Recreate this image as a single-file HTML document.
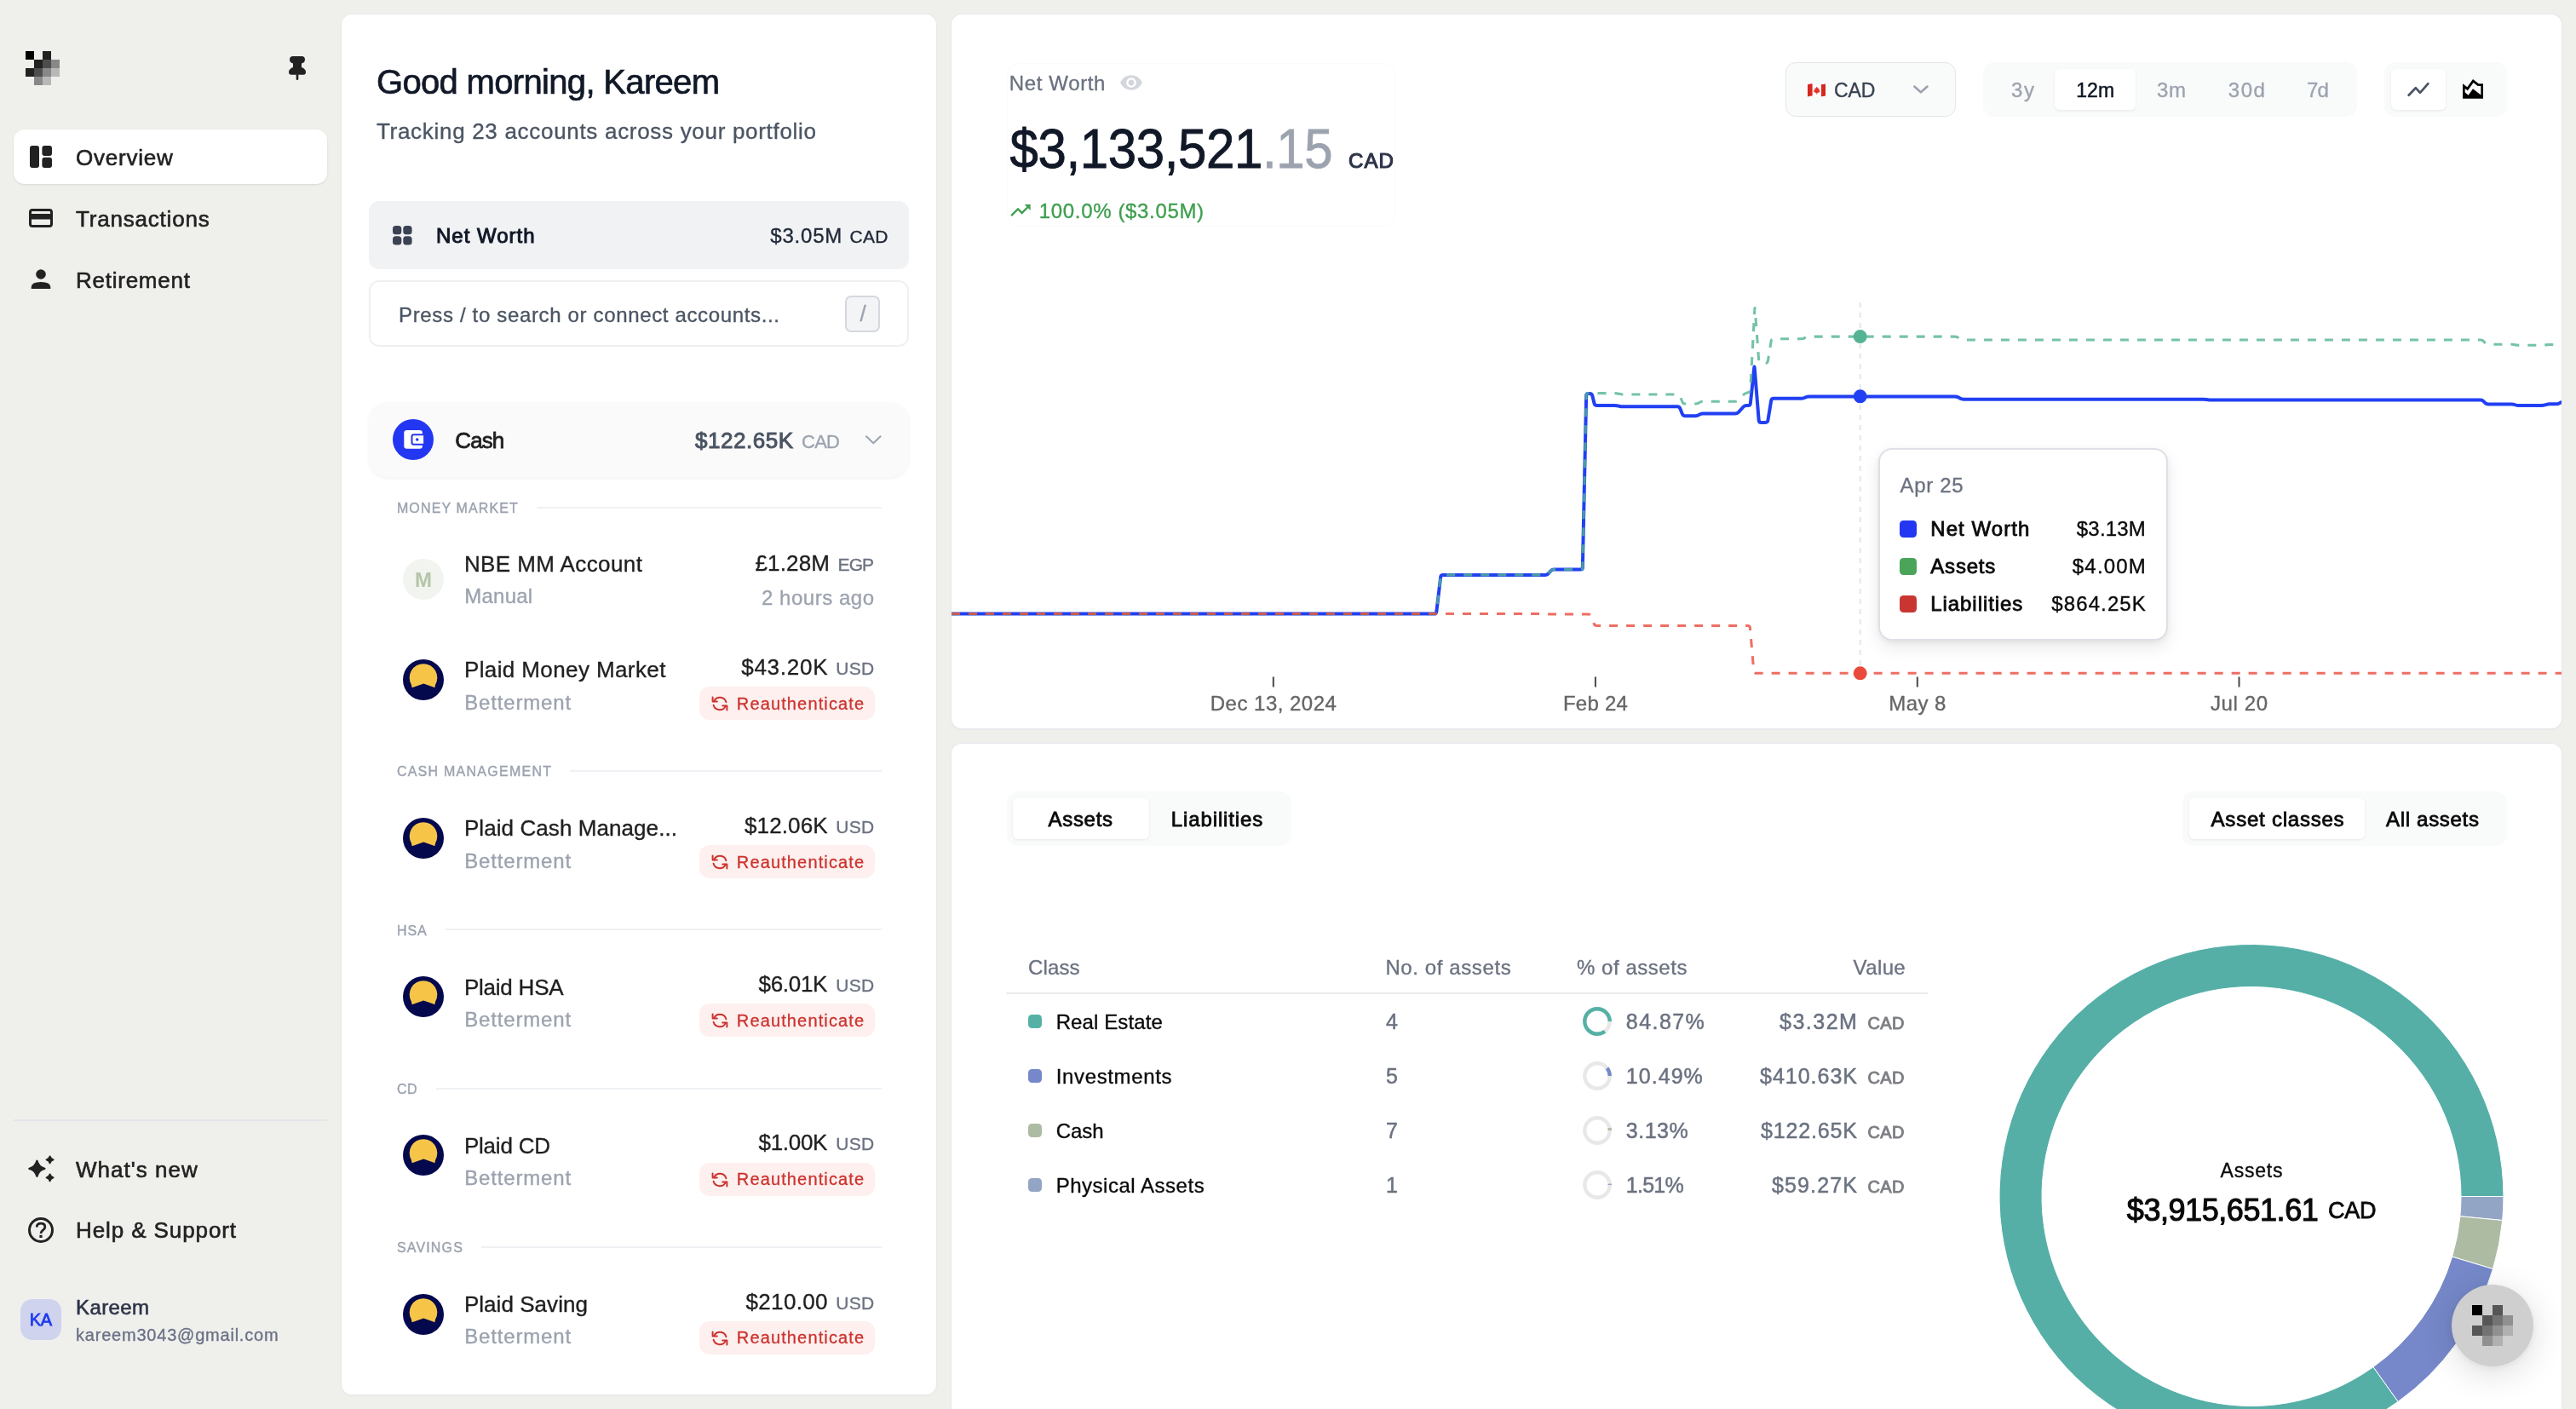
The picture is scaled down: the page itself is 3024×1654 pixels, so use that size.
<!DOCTYPE html>
<html><head><meta charset="utf-8"><title>Dashboard</title>
<style>
html,body{margin:0;padding:0;}
body{width:3024px;height:1654px;overflow:hidden;background:#eff0ec;position:relative;font-family:"Liberation Sans",sans-serif;}
.t{position:absolute;white-space:nowrap;line-height:1;}
.b{position:absolute;display:block;}
svg{overflow:visible;}
#root{position:absolute;left:0;top:0;width:3024px;height:1654px;overflow:hidden;will-change:transform;transform:translateZ(0);}
</style></head><body><div id="root">
<svg class="b" style="left:30px;top:60px;shape-rendering:crispEdges;" width="40" height="40" viewBox="0 0 40 40"><rect x="0" y="0" width="10" height="10" fill="#000"/><rect x="20" y="0" width="10" height="10" fill="#222"/><rect x="10" y="10" width="10" height="10" fill="#222"/><rect x="20" y="10" width="10" height="10" fill="#4d4d4d"/><rect x="30" y="10" width="10" height="10" fill="#888"/><rect x="0" y="20" width="10" height="10" fill="#222"/><rect x="10" y="20" width="10" height="10" fill="#4d4d4d"/><rect x="20" y="20" width="10" height="10" fill="#888"/><rect x="30" y="20" width="10" height="10" fill="#b8b8b8"/><rect x="10" y="30" width="10" height="10" fill="#888"/><rect x="20" y="30" width="10" height="10" fill="#b8b8b8"/></svg>
<svg class="b" style="left:335px;top:62px;" width="28" height="36" viewBox="0 0 28 36"><path d="M9 4 H19 Q23 4 23 8 Q23 11.5 19 12.5 L19 17 Q24 19 24 22.5 Q24 25.8 21 25.8 H7 Q4 25.8 4 22.5 Q4 19 9 17 L9 12.5 Q5 11.5 5 8 Q5 4 9 4 Z" fill="#222"/><rect x="12.7" y="25" width="2.6" height="7" rx="1.3" fill="#222"/></svg>
<div class="b" style="left:16px;top:152px;width:368px;height:64px;background:#fff;border-radius:13px;box-shadow:0 1px 3px rgba(0,0,0,0.08),0 1px 2px rgba(0,0,0,0.04);"></div>
<svg class="b" style="left:35px;top:171px;" width="26" height="26" viewBox="0 0 26 26"><rect x="0" y="0" width="11" height="26" rx="3" fill="#222"/><rect x="14.4" y="0" width="11.6" height="11.9" rx="3" fill="#222"/><rect x="14.4" y="13.8" width="11.6" height="12.2" rx="3" fill="#222"/></svg>
<div class="t" style="left:89.00px;top:172.00px;font-size:26px;color:#222222;letter-spacing:0.786px;-webkit-text-stroke:0.6px #222222;">Overview</div>
<svg class="b" style="left:34px;top:245px;" width="28" height="22" viewBox="0 0 28 22"><rect x="1.5" y="1.5" width="25" height="19" rx="2.5" fill="none" stroke="#222" stroke-width="3"/><rect x="1.5" y="6" width="25" height="6.5" fill="#222"/></svg>
<div class="t" style="left:89.00px;top:244.00px;font-size:26px;color:#222222;letter-spacing:0.800px;-webkit-text-stroke:0.6px #222222;">Transactions</div>
<svg class="b" style="left:36px;top:316px;" width="24" height="24" viewBox="0 0 24 24"><circle cx="12" cy="6" r="5.8" fill="#222"/><path d="M0.7 23 V21 Q0.7 15 12 15 Q23.3 15 23.3 21 V23 Z" fill="#222"/></svg>
<div class="t" style="left:89.00px;top:316.00px;font-size:26px;color:#222222;letter-spacing:0.750px;-webkit-text-stroke:0.6px #222222;">Retirement</div>
<div class="b" style="left:16px;top:1314px;width:368px;height:2px;background:#e4e4ec;"></div>
<svg class="b" style="left:30px;top:1354px;" width="40" height="40" viewBox="0 0 40 40"><path d="M13.4 8.8 Q15.200000000000001 16.0 22.4 17.8 Q15.200000000000001 19.6 13.4 26.8 Q11.6 19.6 4.4 17.8 Q11.6 16.0 13.4 8.8 Z" fill="#222" stroke="#222" stroke-width="2.4" stroke-linejoin="round"/><path d="M28.6 3.3000000000000007 Q29.42 6.58 32.7 7.4 Q29.42 8.22 28.6 11.5 Q27.78 8.22 24.5 7.4 Q27.78 6.58 28.6 3.3000000000000007 Z" fill="#222" stroke="#222" stroke-width="1.8" stroke-linejoin="round"/><path d="M28.6 24.299999999999997 Q29.42 27.58 32.7 28.4 Q29.42 29.22 28.6 32.5 Q27.78 29.22 24.5 28.4 Q27.78 27.58 28.6 24.299999999999997 Z" fill="#222" stroke="#222" stroke-width="1.8" stroke-linejoin="round"/></svg>
<div class="t" style="left:89.00px;top:1360.00px;font-size:26px;color:#222222;letter-spacing:1.028px;-webkit-text-stroke:0.6px #222222;">What&#x27;s new</div>
<svg class="b" style="left:32px;top:1428px;" width="32" height="32" viewBox="0 0 32 32"><circle cx="16" cy="16" r="13.5" fill="none" stroke="#222" stroke-width="3"/><path d="M11.2 12.5 Q11.2 8.2 16 8.2 Q20.8 8.2 20.8 12.2 Q20.8 14.5 18.3 16.2 Q16 17.8 16 20" fill="none" stroke="#222" stroke-width="2.8" stroke-linecap="butt"/><rect x="14.4" y="21.8" width="3.2" height="3.2" fill="#222"/></svg>
<div class="t" style="left:89.00px;top:1431.00px;font-size:26px;color:#222222;letter-spacing:0.904px;-webkit-text-stroke:0.6px #222222;">Help &amp; Support</div>
<div class="b" style="left:24px;top:1525px;width:48px;height:48px;background:#d0d3ee;border-radius:14px;"></div>
<div class="t" style="left:34.75px;top:1539.00px;font-size:20px;color:#1f3bf0;letter-spacing:-0.250px;-webkit-text-stroke:0.8px #1f3bf0;">KA</div>
<div class="t" style="left:89.00px;top:1523.00px;font-size:24px;color:#2d3348;letter-spacing:0.400px;-webkit-text-stroke:0.6px #2d3348;">Kareem</div>
<div class="t" style="left:89.00px;top:1557.00px;font-size:20px;color:#6b7186;letter-spacing:0.787px;-webkit-text-stroke:0.35px #6b7186;">kareem3043@gmail.com</div>
<div class="b" style="left:401px;top:17px;width:698px;height:1620px;background:#fff;border-radius:12px;box-shadow:0 0 0 1px #e7e8ee,0 1px 3px rgba(0,0,0,0.05);"></div>
<div class="t" style="left:442.00px;top:76.00px;font-size:40px;color:#111827;letter-spacing:-0.671px;-webkit-text-stroke:0.7px #111827;">Good morning, Kareem</div>
<div class="t" style="left:442.00px;top:141.00px;font-size:26px;color:#4b5563;letter-spacing:0.695px;-webkit-text-stroke:0.35px #4b5563;">Tracking 23 accounts across your portfolio</div>
<div class="b" style="left:433px;top:236px;width:634px;height:80px;background:#f1f2f4;border-radius:12px;"></div>
<svg class="b" style="left:461px;top:265px;" width="23" height="23" viewBox="0 0 23 23"><rect x="0" y="0" width="10.3" height="10.3" rx="3.6" fill="#3b4254"/><rect x="0" y="12.3" width="10.3" height="10.3" rx="3.6" fill="#3b4254"/><rect x="12.3" y="0" width="10.3" height="10.3" rx="3.6" fill="#3b4254"/><rect x="12.3" y="12.3" width="10.3" height="10.3" rx="3.6" fill="#3b4254"/></svg>
<div class="t" style="left:512.00px;top:265.00px;font-size:24px;color:#111827;letter-spacing:0.988px;-webkit-text-stroke:1.0px #111827;">Net Worth</div>
<div class="t" style="left:997.40px;top:267.00px;font-size:21px;color:#1f2937;letter-spacing:0.325px;-webkit-text-stroke:0.35px #1f2937;">CAD</div>
<div class="t" style="left:904.30px;top:265.00px;font-size:24px;color:#1f2937;letter-spacing:0.800px;-webkit-text-stroke:0.35px #1f2937;">$3.05M</div>
<div class="b" style="left:433px;top:329px;width:634px;height:78px;background:#fff;border-radius:12px;border:2px solid #eef0f3;box-sizing:border-box;"></div>
<div class="t" style="left:468.00px;top:358.00px;font-size:24px;color:#4b5563;letter-spacing:0.654px;-webkit-text-stroke:0.35px #4b5563;">Press / to search or connect accounts...</div>
<div class="b" style="left:992px;top:346.5px;width:41px;height:43.0px;background:#f3f4f6;border-radius:7px;border:2px solid #d5d8de;box-sizing:border-box;"></div>
<div class="t" style="left:1009.38px;top:355.00px;font-size:26px;color:#9ca3af;-webkit-text-stroke:0.35px #9ca3af;">/</div>
<div class="b" style="left:433px;top:472px;width:634px;height:88px;background:#fafafa;border-radius:22px;box-shadow:0 2px 4px rgba(0,0,0,0.05);"></div>
<svg class="b" style="left:461px;top:492px;" width="48" height="48" viewBox="0 0 48 48"><circle cx="24" cy="24" r="24" fill="#2337f2"/><rect x="13.3" y="13" width="21.6" height="21.8" rx="3.2" fill="#fff"/><path d="M36.1,18.3 H24.7 Q22.5,18.3 22.5,20.5 V27.5 Q22.5,29.7 24.7,29.7 H36.1" fill="#fff" stroke="#2337f2" stroke-width="2"/><circle cx="28.7" cy="23.9" r="1.75" fill="#2337f2"/></svg>
<div class="t" style="left:534.30px;top:504.00px;font-size:26px;color:#1f1f1f;letter-spacing:-0.917px;-webkit-text-stroke:0.8px #1f1f1f;">Cash</div>
<div class="t" style="left:816.00px;top:504.00px;font-size:26px;color:#4b5563;letter-spacing:0.536px;-webkit-text-stroke:1.0px #4b5563;">$122.65K</div>
<div class="t" style="left:941.00px;top:508.00px;font-size:22px;color:#9ca3af;letter-spacing:-0.750px;-webkit-text-stroke:0.35px #9ca3af;">CAD</div>
<svg class="b" style="left:1013px;top:509px;" width="24" height="14" viewBox="0 0 24 14"><path d="M4 3.2 L12.3 11.3 L20.6 3.2" fill="none" stroke="#9ca3af" stroke-width="2" stroke-linecap="round" stroke-linejoin="round"/></svg>
<div class="t" style="left:465.90px;top:589.00px;font-size:16px;color:#9ca3af;letter-spacing:1.136px;-webkit-text-stroke:0.4px #9ca3af;">MONEY MARKET</div>
<div class="b" style="left:630.1999999999999px;top:594.9px;width:404.80000000000007px;height:2.0px;background:#eff1f4;"></div>
<div class="b" style="left:473px;top:656px;width:48px;height:48px;background:#f1f4ef;border-radius:24px;"></div>
<div class="t" style="left:487.00px;top:669.00px;font-size:24px;color:#b6c5a9;font-weight:700;">M</div>
<div class="t" style="left:544.90px;top:649.00px;font-size:26px;color:#1f1f1f;letter-spacing:0.404px;-webkit-text-stroke:0.35px #1f1f1f;">NBE MM Account</div>
<div class="t" style="left:545.20px;top:688.00px;font-size:24px;color:#9ca3af;letter-spacing:0.250px;-webkit-text-stroke:0.35px #9ca3af;">Manual</div>
<div class="t" style="left:983.50px;top:652.00px;font-size:21px;color:#6b7280;letter-spacing:-0.875px;-webkit-text-stroke:0.35px #6b7280;">EGP</div>
<div class="t" style="left:886.50px;top:648.00px;font-size:26px;color:#1f1f1f;letter-spacing:0.150px;-webkit-text-stroke:0.35px #1f1f1f;">£1.28M</div>
<div class="t" style="left:894.00px;top:690.00px;font-size:24px;color:#9ca3af;letter-spacing:0.525px;-webkit-text-stroke:0.35px #9ca3af;">2 hours ago</div>
<svg class="b" style="left:473px;top:773.7px;" width="48" height="48" viewBox="0 0 48 48"><circle cx="24" cy="24" r="24" fill="#04084d"/><path d="M24 5.2 A16.3 16.3 0 0 1 38.2 29.5 L37.3 33.2 L24.3 28.6 L10.7 33.2 L9.8 29.5 A16.3 16.3 0 0 1 24 5.2 Z" fill="#f6c548"/></svg>
<div class="t" style="left:544.90px;top:773.00px;font-size:26px;color:#1f1f1f;letter-spacing:0.397px;-webkit-text-stroke:0.35px #1f1f1f;">Plaid Money Market</div>
<div class="t" style="left:545.20px;top:813.00px;font-size:24px;color:#9ca3af;letter-spacing:0.833px;-webkit-text-stroke:0.35px #9ca3af;">Betterment</div>
<div class="t" style="left:981.30px;top:774.00px;font-size:21px;color:#6b7280;letter-spacing:0.225px;-webkit-text-stroke:0.35px #6b7280;">USD</div>
<div class="t" style="left:870.20px;top:770.00px;font-size:26px;color:#1f1f1f;letter-spacing:0.758px;-webkit-text-stroke:0.35px #1f1f1f;">$43.20K</div>
<div class="b" style="left:821px;top:805.9000000000001px;width:206px;height:39.0px;background:#fdf0ef;border-radius:12px;"></div>
<svg class="b" style="left:835px;top:815.9000000000001px;" width="20" height="20" viewBox="0 0 20 20"><g fill="none" stroke="#cc332e" stroke-width="2" stroke-linecap="round" stroke-linejoin="round"><path d="M3.2 7.2 A7.6 7.6 0 0 1 17.4 8.2"/><path d="M1.6 2.4 V7.6 H6.8"/><path d="M16.8 12.8 A7.6 7.6 0 0 1 2.6 11.8"/><path d="M18.4 17.6 V12.4 H13.2"/></g></svg>
<div class="t" style="left:864.80px;top:816.00px;font-size:20px;color:#cc332e;letter-spacing:1.138px;-webkit-text-stroke:0.3px #cc332e;">Reauthenticate</div>
<div class="t" style="left:465.90px;top:898.00px;font-size:16px;color:#9ca3af;letter-spacing:1.250px;-webkit-text-stroke:0.4px #9ca3af;">CASH MANAGEMENT</div>
<div class="b" style="left:669.1999999999999px;top:904.0999999999999px;width:365.80000000000007px;height:2.0px;background:#eff1f4;"></div>
<svg class="b" style="left:473px;top:959.8px;" width="48" height="48" viewBox="0 0 48 48"><circle cx="24" cy="24" r="24" fill="#04084d"/><path d="M24 5.2 A16.3 16.3 0 0 1 38.2 29.5 L37.3 33.2 L24.3 28.6 L10.7 33.2 L9.8 29.5 A16.3 16.3 0 0 1 24 5.2 Z" fill="#f6c548"/></svg>
<div class="t" style="left:544.90px;top:959.00px;font-size:26px;color:#1f1f1f;letter-spacing:0.079px;-webkit-text-stroke:0.35px #1f1f1f;">Plaid Cash Manage...</div>
<div class="t" style="left:545.20px;top:999.00px;font-size:24px;color:#9ca3af;letter-spacing:0.833px;-webkit-text-stroke:0.35px #9ca3af;">Betterment</div>
<div class="t" style="left:981.30px;top:960.00px;font-size:21px;color:#6b7280;letter-spacing:0.225px;-webkit-text-stroke:0.35px #6b7280;">USD</div>
<div class="t" style="left:874.00px;top:956.00px;font-size:26px;color:#1f1f1f;letter-spacing:0.125px;-webkit-text-stroke:0.35px #1f1f1f;">$12.06K</div>
<div class="b" style="left:821px;top:992.0px;width:206px;height:39.0px;background:#fdf0ef;border-radius:12px;"></div>
<svg class="b" style="left:835px;top:1002.0px;" width="20" height="20" viewBox="0 0 20 20"><g fill="none" stroke="#cc332e" stroke-width="2" stroke-linecap="round" stroke-linejoin="round"><path d="M3.2 7.2 A7.6 7.6 0 0 1 17.4 8.2"/><path d="M1.6 2.4 V7.6 H6.8"/><path d="M16.8 12.8 A7.6 7.6 0 0 1 2.6 11.8"/><path d="M18.4 17.6 V12.4 H13.2"/></g></svg>
<div class="t" style="left:864.80px;top:1002.00px;font-size:20px;color:#cc332e;letter-spacing:1.138px;-webkit-text-stroke:0.3px #cc332e;">Reauthenticate</div>
<div class="t" style="left:465.90px;top:1085.00px;font-size:16px;color:#9ca3af;letter-spacing:1.000px;-webkit-text-stroke:0.4px #9ca3af;">HSA</div>
<div class="b" style="left:523.1999999999999px;top:1090.3px;width:511.80000000000007px;height:2.0px;background:#eff1f4;"></div>
<svg class="b" style="left:473px;top:1146.0px;" width="48" height="48" viewBox="0 0 48 48"><circle cx="24" cy="24" r="24" fill="#04084d"/><path d="M24 5.2 A16.3 16.3 0 0 1 38.2 29.5 L37.3 33.2 L24.3 28.6 L10.7 33.2 L9.8 29.5 A16.3 16.3 0 0 1 24 5.2 Z" fill="#f6c548"/></svg>
<div class="t" style="left:544.90px;top:1146.00px;font-size:26px;color:#1f1f1f;letter-spacing:-0.219px;-webkit-text-stroke:0.35px #1f1f1f;">Plaid HSA</div>
<div class="t" style="left:545.20px;top:1185.00px;font-size:24px;color:#9ca3af;letter-spacing:0.833px;-webkit-text-stroke:0.35px #9ca3af;">Betterment</div>
<div class="t" style="left:981.30px;top:1146.00px;font-size:21px;color:#6b7280;letter-spacing:0.225px;-webkit-text-stroke:0.35px #6b7280;">USD</div>
<div class="t" style="left:890.50px;top:1142.00px;font-size:26px;color:#1f1f1f;letter-spacing:-0.300px;-webkit-text-stroke:0.35px #1f1f1f;">$6.01K</div>
<div class="b" style="left:821px;top:1178.2px;width:206px;height:39.0px;background:#fdf0ef;border-radius:12px;"></div>
<svg class="b" style="left:835px;top:1188.2px;" width="20" height="20" viewBox="0 0 20 20"><g fill="none" stroke="#cc332e" stroke-width="2" stroke-linecap="round" stroke-linejoin="round"><path d="M3.2 7.2 A7.6 7.6 0 0 1 17.4 8.2"/><path d="M1.6 2.4 V7.6 H6.8"/><path d="M16.8 12.8 A7.6 7.6 0 0 1 2.6 11.8"/><path d="M18.4 17.6 V12.4 H13.2"/></g></svg>
<div class="t" style="left:864.80px;top:1188.00px;font-size:20px;color:#cc332e;letter-spacing:1.138px;-webkit-text-stroke:0.3px #cc332e;">Reauthenticate</div>
<div class="t" style="left:465.90px;top:1271.00px;font-size:16px;color:#9ca3af;letter-spacing:0.500px;-webkit-text-stroke:0.4px #9ca3af;">CD</div>
<div class="b" style="left:511.7px;top:1276.6px;width:523.3px;height:2.0px;background:#eff1f4;"></div>
<svg class="b" style="left:473px;top:1332.3px;" width="48" height="48" viewBox="0 0 48 48"><circle cx="24" cy="24" r="24" fill="#04084d"/><path d="M24 5.2 A16.3 16.3 0 0 1 38.2 29.5 L37.3 33.2 L24.3 28.6 L10.7 33.2 L9.8 29.5 A16.3 16.3 0 0 1 24 5.2 Z" fill="#f6c548"/></svg>
<div class="t" style="left:544.90px;top:1332.00px;font-size:26px;color:#1f1f1f;letter-spacing:-0.214px;-webkit-text-stroke:0.35px #1f1f1f;">Plaid CD</div>
<div class="t" style="left:545.20px;top:1371.00px;font-size:24px;color:#9ca3af;letter-spacing:0.833px;-webkit-text-stroke:0.35px #9ca3af;">Betterment</div>
<div class="t" style="left:981.30px;top:1332.00px;font-size:21px;color:#6b7280;letter-spacing:0.225px;-webkit-text-stroke:0.35px #6b7280;">USD</div>
<div class="t" style="left:890.50px;top:1328.00px;font-size:26px;color:#1f1f1f;letter-spacing:-0.300px;-webkit-text-stroke:0.35px #1f1f1f;">$1.00K</div>
<div class="b" style="left:821px;top:1364.5px;width:206px;height:39.0px;background:#fdf0ef;border-radius:12px;"></div>
<svg class="b" style="left:835px;top:1374.5px;" width="20" height="20" viewBox="0 0 20 20"><g fill="none" stroke="#cc332e" stroke-width="2" stroke-linecap="round" stroke-linejoin="round"><path d="M3.2 7.2 A7.6 7.6 0 0 1 17.4 8.2"/><path d="M1.6 2.4 V7.6 H6.8"/><path d="M16.8 12.8 A7.6 7.6 0 0 1 2.6 11.8"/><path d="M18.4 17.6 V12.4 H13.2"/></g></svg>
<div class="t" style="left:864.80px;top:1374.00px;font-size:20px;color:#cc332e;letter-spacing:1.138px;-webkit-text-stroke:0.3px #cc332e;">Reauthenticate</div>
<div class="t" style="left:465.90px;top:1457.00px;font-size:16px;color:#9ca3af;letter-spacing:1.167px;-webkit-text-stroke:0.4px #9ca3af;">SAVINGS</div>
<div class="b" style="left:565.1999999999999px;top:1462.8px;width:469.80000000000007px;height:2.0px;background:#eff1f4;"></div>
<svg class="b" style="left:473px;top:1518.5px;" width="48" height="48" viewBox="0 0 48 48"><circle cx="24" cy="24" r="24" fill="#04084d"/><path d="M24 5.2 A16.3 16.3 0 0 1 38.2 29.5 L37.3 33.2 L24.3 28.6 L10.7 33.2 L9.8 29.5 A16.3 16.3 0 0 1 24 5.2 Z" fill="#f6c548"/></svg>
<div class="t" style="left:544.90px;top:1518.00px;font-size:26px;color:#1f1f1f;letter-spacing:0.045px;-webkit-text-stroke:0.35px #1f1f1f;">Plaid Saving</div>
<div class="t" style="left:545.20px;top:1557.00px;font-size:24px;color:#9ca3af;letter-spacing:0.833px;-webkit-text-stroke:0.35px #9ca3af;">Betterment</div>
<div class="t" style="left:981.30px;top:1519.00px;font-size:21px;color:#6b7280;letter-spacing:0.225px;-webkit-text-stroke:0.35px #6b7280;">USD</div>
<div class="t" style="left:875.50px;top:1515.00px;font-size:26px;color:#1f1f1f;letter-spacing:0.333px;-webkit-text-stroke:0.35px #1f1f1f;">$210.00</div>
<div class="b" style="left:821px;top:1550.7px;width:206px;height:39.0px;background:#fdf0ef;border-radius:12px;"></div>
<svg class="b" style="left:835px;top:1560.7px;" width="20" height="20" viewBox="0 0 20 20"><g fill="none" stroke="#cc332e" stroke-width="2" stroke-linecap="round" stroke-linejoin="round"><path d="M3.2 7.2 A7.6 7.6 0 0 1 17.4 8.2"/><path d="M1.6 2.4 V7.6 H6.8"/><path d="M16.8 12.8 A7.6 7.6 0 0 1 2.6 11.8"/><path d="M18.4 17.6 V12.4 H13.2"/></g></svg>
<div class="t" style="left:864.80px;top:1560.00px;font-size:20px;color:#cc332e;letter-spacing:1.138px;-webkit-text-stroke:0.3px #cc332e;">Reauthenticate</div>
<div class="b" style="left:1117px;top:17px;width:1890px;height:838px;background:#fff;border-radius:12px;box-shadow:0 0 0 1px #e7e8ee,0 1px 3px rgba(0,0,0,0.05);"></div>
<div class="b" style="left:1181.5px;top:73.5px;width:456.5px;height:192.2px;background:transparent;border-radius:14px;border:1.5px solid #fbfbfb;box-sizing:border-box;"></div>
<div class="t" style="left:1184.80px;top:86.00px;font-size:24px;color:#6b7280;letter-spacing:0.625px;-webkit-text-stroke:0.35px #6b7280;">Net Worth</div>
<svg class="b" style="left:1314px;top:82.7px;" width="28" height="28" viewBox="0 0 24 24"><path fill="#d3d6dd" d="M12 4.5C7 4.5 2.73 7.61 1 12c1.73 4.39 6 7.5 11 7.5s9.27-3.11 11-7.5c-1.73-4.39-6-7.5-11-7.5zM12 17c-2.76 0-5-2.24-5-5s2.24-5 5-5 5 2.24 5 5-2.24 5-5 5zm0-8c-1.66 0-3 1.34-3 3s1.34 3 3 3 3-1.34 3-3-1.34-3-3-3z"/></svg>
<div class="t" style="left:1185.60px;top:147.00px;font-size:60px;color:#111827;letter-spacing:-0.396px;-webkit-text-stroke:0.8px #111827;transform:scaleY(1.065);transform-origin:0 50px;">$3,133,521<span style="color:#9ca3af;-webkit-text-stroke-color:#9ca3af">.15</span></div>
<div class="t" style="left:1583.00px;top:177.00px;font-size:24px;color:#2d3348;letter-spacing:1.125px;-webkit-text-stroke:1.1px #2d3348;">CAD</div>
<svg class="b" style="left:1183.5px;top:232.6px;" width="28" height="28" viewBox="0 0 24 24"><path fill="#3f9f4f" d="M16 6l2.29 2.29-4.88 4.88-4-4L2 16.59 3.41 18l6-6 4 4 6.3-6.29L22 12V6z"/></svg>
<div class="t" style="left:1219.80px;top:236.00px;font-size:24px;color:#3f9f4f;letter-spacing:0.657px;-webkit-text-stroke:0.35px #3f9f4f;">100.0% ($3.05M)</div>
<div class="b" style="left:2096px;top:73px;width:200px;height:64px;background:#f9fafa;border-radius:12px;border:1.5px solid #e4e6ec;box-sizing:border-box;"></div>
<svg class="b" style="left:2121px;top:96.6px;" width="23" height="18" viewBox="0 0 23 18"><path d="M1 2.2 Q6 0.8 11.5 1.8 T22 1.4 V15.6 Q17 17 11.5 16 T1 16.4 Z" fill="#fff"/><path d="M1 2.2 Q3.8 1.4 6.6 1.3 V15.5 Q3.8 15.6 1 16.4 Z" fill="#d5281f"/><path d="M17 2.1 Q19.5 2 22 1.4 V15.6 Q19.5 16.3 17 16.3 Z" fill="#d5281f"/><path d="M11.8 4.6 L13 6.8 L14.4 6.2 L14 8.6 L15.6 8.4 L15 10 L15.8 10.6 L12.6 12.2 L12.2 12.3 V13.8 H11.4 V12.3 L11 12.2 L7.8 10.6 L8.6 10 L8 8.4 L9.6 8.6 L9.2 6.2 L10.6 6.8 Z" fill="#e63329"/></svg>
<div class="t" style="left:2153.00px;top:95.00px;font-size:23px;color:#374151;letter-spacing:-0.100px;-webkit-text-stroke:0.35px #374151;">CAD</div>
<svg class="b" style="left:2244px;top:98px;" width="22" height="14" viewBox="0 0 22 14"><path d="M3.3 3.6 L10.9 10.3 L18.5 3.6" fill="none" stroke="#9ca3af" stroke-width="2.6" stroke-linecap="round" stroke-linejoin="round"/></svg>
<div class="b" style="left:2328px;top:73px;width:439px;height:64px;background:#f9fafa;border-radius:13px;"></div>
<div class="b" style="left:2412px;top:81px;width:95px;height:48px;background:#fff;border-radius:6px;box-shadow:0 1px 3px rgba(0,0,0,0.08);"></div>
<div class="t" style="left:2361.00px;top:94.00px;font-size:24px;color:#9ca3af;letter-spacing:1.750px;-webkit-text-stroke:0.35px #9ca3af;">3y</div>
<div class="t" style="left:2437.20px;top:95.00px;font-size:23px;color:#111827;letter-spacing:0.125px;-webkit-text-stroke:0.5px #111827;">12m</div>
<div class="t" style="left:2532.00px;top:94.00px;font-size:24px;color:#9ca3af;letter-spacing:0.750px;-webkit-text-stroke:0.35px #9ca3af;">3m</div>
<div class="t" style="left:2615.80px;top:94.00px;font-size:24px;color:#9ca3af;letter-spacing:1.500px;-webkit-text-stroke:0.35px #9ca3af;">30d</div>
<div class="t" style="left:2708.00px;top:94.00px;font-size:24px;color:#9ca3af;letter-spacing:-0.750px;-webkit-text-stroke:0.35px #9ca3af;">7d</div>
<div class="b" style="left:2799px;top:73px;width:144px;height:64px;background:#f9fafa;border-radius:13px;"></div>
<div class="b" style="left:2807px;top:81px;width:64px;height:48px;background:#fff;border-radius:6px;box-shadow:0 1px 3px rgba(0,0,0,0.08);"></div>
<svg class="b" style="left:2820px;top:90px;" width="40" height="30" viewBox="0 0 40 30"><polyline points="7.6,21.8 15.8,13.2 21,18.8 30.4,8.2" fill="none" stroke="#4b5563" stroke-width="2.7" stroke-linecap="round" stroke-linejoin="round"/></svg>
<svg class="b" style="left:2887px;top:89.3px;" width="32" height="32" viewBox="0 0 24 24"><path fill="#000" fill-rule="evenodd" d="M17,7l-5-4l-5,7L3,7v13h18V7H17z M19,16.95l-7-5.45L8,17l-3-2.4V11.2l2.44,1.83l4.96-6.95L16.3,9H19V16.95z"/></svg>
<svg class="b" style="left:1117px;top:0;overflow:hidden" width="1890" height="870" viewBox="1117 0 1890 870"><line x1="2183.7" y1="355.1" x2="2183.7" y2="790" stroke="#e6e6e6" stroke-width="2" stroke-dasharray="6 6"/><path d="M1117,720.6 L1683.60,720.60 Q1686,720.6 1686.29,718.22 L1691.21,677.28 Q1691.5,674.9 1693.90,674.90 L1814.10,674.90 Q1816.5,674.9 1818.00,673.02 L1820.10,670.38 Q1821.6,668.5 1824.00,668.50 L1855.40,668.50 Q1857.8,668.5 1857.85,666.10 L1862.15,464.40 Q1862.2,462 1864.60,462.00 L1866.20,462.00 Q1868.6,462 1869.20,464.32 L1871.60,473.68 Q1872.2,476 1874.60,476.00 L1895.60,476.00 Q1898,476 1900.32,476.60 L1900.68,476.70 Q1903,477.3 1905.40,477.30 L1969.00,477.30 Q1971.4,477.3 1972.30,479.53 L1974.90,485.97 Q1975.8,488.2 1978.20,488.20 L1990.40,488.20 Q1992.7,488.2 1994.60,486.90 L1994.60,486.90 Q1996.5,485.6 1998.80,485.60 L2036.90,485.60 Q2039.3,485.6 2040.91,483.82 L2046.39,477.78 Q2048,476 2050.40,476.00 L2052.20,476.00 Q2054.6,476 2054.85,473.61 L2059.25,431.79 Q2059.5,429.4 2059.69,431.79 L2064.71,493.51 Q2064.9,495.9 2067.30,495.90 L2072.60,495.90 Q2075,495.9 2075.39,493.53 L2079.21,470.17 Q2079.6,467.8 2082.00,467.80 L2114.20,467.80 Q2116.6,467.8 2118.76,466.74 L2119.34,466.46 Q2121.5,465.4 2123.90,465.40 L2294.70,465.40 Q2297.1,465.4 2299.18,466.60 L2300.72,467.50 Q2302.8,468.7 2305.20,468.70 L2585.60,468.70 Q2588,468.7 2590.37,469.06 L2591.63,469.24 Q2594,469.6 2596.40,469.60 L2911.70,469.60 Q2914.1,469.6 2915.76,471.33 L2917.14,472.77 Q2918.8,474.5 2921.20,474.50 L2948.66,474.50 Q2950.7,474.5 2952.60,475.25 L2952.60,475.25 Q2954.5,476 2956.54,476.00 L2983.60,476.00 Q2986,476 2988.27,475.23 L2988.73,475.07 Q2991,474.3 2993.40,474.30 L3001.22,474.30 Q3003,474.3 3004.50,473.35 L3006,472.4" fill="none" stroke="#2140f3" stroke-width="4" stroke-linejoin="round" stroke-linecap="round"/><path d="M1117,720.6 L1683.60,720.60 Q1686,720.6 1686.29,718.22 L1691.21,677.28 Q1691.5,674.9 1693.90,674.90 L1814.10,674.90 Q1816.5,674.9 1818.00,673.02 L1820.10,670.38 Q1821.6,668.5 1824.00,668.50 L1855.40,668.50 Q1857.8,668.5 1857.85,666.10 L1862.15,464.00 Q1862.2,461.6 1864.60,461.60 L1895.60,461.60 Q1898,461.6 1900.31,462.25 L1900.69,462.35 Q1903,463 1905.40,463.00 L1969.00,463.00 Q1971.4,463 1972.29,465.23 L1974.91,471.77 Q1975.8,474 1978.20,474.00 L1990.37,474.00 Q1992.7,474 1994.60,472.65 L1994.60,472.65 Q1996.5,471.3 1998.83,471.30 L2036.90,471.30 Q2039.3,471.3 2040.94,469.55 L2046.36,463.75 Q2048,462 2050.30,461.30 L2052.30,460.70 Q2054.6,460 2054.73,457.60 L2059.87,362.40 Q2060,360 2060.18,362.39 L2064.72,423.81 Q2064.9,426.2 2067.30,426.20 L2072.60,426.20 Q2075,426.2 2075.38,423.83 L2079.22,400.07 Q2079.6,397.7 2082.00,397.70 L2114.20,397.70 Q2116.6,397.7 2118.72,396.58 L2119.38,396.22 Q2121.5,395.1 2123.90,395.10 L2294.70,395.10 Q2297.1,395.1 2299.08,396.46 L2300.82,397.64 Q2302.8,399 2305.20,399.00 L2911.70,399.00 Q2914.1,399 2915.69,400.80 L2917.21,402.50 Q2918.8,404.3 2921.20,404.30 L2948.74,404.30 Q2950.7,404.3 2952.60,404.80 L2952.60,404.80 Q2954.5,405.3 2956.46,405.30 L2983.60,405.30 Q2986,405.3 2988.37,404.92 L2988.63,404.88 Q2991,404.5 2993.40,404.50 L3002,404.5" fill="none" stroke="#53b394" stroke-opacity="0.8" stroke-width="3.1" stroke-dasharray="10 10" stroke-linejoin="round"/><path d="M1117,720.6 L1815.47,720.60 Q1816.5,720.6 1817.50,720.85 L1817.50,720.85 Q1818.5,721.1 1819.53,721.10 L1864.40,721.10 Q1866.8,721.1 1867.67,723.34 L1871.13,732.16 Q1872,734.4 1874.40,734.40 L2051.80,734.40 Q2054.2,734.4 2054.41,736.79 L2058.79,787.91 Q2059,790.3 2061.40,790.30 L3007,790.3" fill="none" stroke="#ea4a3c" stroke-opacity="0.8" stroke-width="3" stroke-dasharray="10 10" stroke-linejoin="round"/><circle cx="2183.7" cy="395.1" r="8" fill="#53b394"/><circle cx="2183.7" cy="465.3" r="8" fill="#2140f3"/><circle cx="2183.7" cy="790.3" r="8" fill="#ea4a3c"/><line x1="1494.8" y1="794.5" x2="1494.8" y2="806.5" stroke="#484848" stroke-width="2"/><line x1="1872.9" y1="794.5" x2="1872.9" y2="806.5" stroke="#484848" stroke-width="2"/><line x1="2250.8" y1="794.5" x2="2250.8" y2="806.5" stroke="#484848" stroke-width="2"/><line x1="2628.5" y1="794.5" x2="2628.5" y2="806.5" stroke="#484848" stroke-width="2"/></svg>
<div class="t" style="left:1420.80px;top:814.00px;font-size:24px;color:#666;letter-spacing:0.477px;-webkit-text-stroke:0.35px #666;">Dec 13, 2024</div>
<div class="t" style="left:1834.90px;top:814.00px;font-size:24px;color:#666;letter-spacing:0.250px;-webkit-text-stroke:0.35px #666;">Feb 24</div>
<div class="t" style="left:2217.30px;top:814.00px;font-size:24px;color:#666;letter-spacing:0.438px;-webkit-text-stroke:0.35px #666;">May 8</div>
<div class="t" style="left:2595.00px;top:814.00px;font-size:24px;color:#666;letter-spacing:0.600px;-webkit-text-stroke:0.35px #666;">Jul 20</div>
<div class="b" style="left:2204.5px;top:525.5px;width:340.0px;height:226.0px;background:#fff;border-radius:16px;border:2px solid #dfdfe8;box-sizing:border-box;box-shadow:0 8px 20px rgba(0,0,0,0.09),0 2px 6px rgba(0,0,0,0.05);"></div>
<div class="t" style="left:2230.60px;top:558.00px;font-size:24px;color:#6b7280;letter-spacing:0.650px;-webkit-text-stroke:0.35px #6b7280;">Apr 25</div>
<div class="b" style="left:2229.8px;top:611px;width:20.0px;height:20px;background:#2337f2;border-radius:4.5px;"></div>
<div class="t" style="left:2266.30px;top:609.00px;font-size:24px;color:#0a0a0a;letter-spacing:1.062px;-webkit-text-stroke:0.8px #0a0a0a;">Net Worth</div>
<div class="t" style="left:2437.80px;top:609.00px;font-size:24px;color:#0a0a0a;letter-spacing:0.200px;-webkit-text-stroke:0.35px #0a0a0a;">$3.13M</div>
<div class="b" style="left:2229.8px;top:655px;width:20.0px;height:20px;background:#4aa559;border-radius:4.5px;"></div>
<div class="t" style="left:2266.30px;top:653.00px;font-size:24px;color:#0a0a0a;letter-spacing:0.800px;-webkit-text-stroke:0.8px #0a0a0a;">Assets</div>
<div class="t" style="left:2432.80px;top:653.00px;font-size:24px;color:#0a0a0a;letter-spacing:1.200px;-webkit-text-stroke:0.35px #0a0a0a;">$4.00M</div>
<div class="b" style="left:2229.8px;top:699px;width:20.0px;height:20px;background:#c93632;border-radius:4.5px;"></div>
<div class="t" style="left:2266.30px;top:697.00px;font-size:24px;color:#0a0a0a;letter-spacing:0.925px;-webkit-text-stroke:0.8px #0a0a0a;">Liabilities</div>
<div class="t" style="left:2408.30px;top:697.00px;font-size:24px;color:#0a0a0a;letter-spacing:1.107px;-webkit-text-stroke:0.35px #0a0a0a;">$864.25K</div>
<div class="b" style="left:1117px;top:873px;width:1890px;height:827px;background:#fff;border-radius:12px;box-shadow:0 0 0 1px #e7e8ee,0 1px 3px rgba(0,0,0,0.05);"></div>
<div class="b" style="left:1181.5px;top:929px;width:334.5px;height:64px;background:#f9fafa;border-radius:13px;"></div>
<div class="b" style="left:1188.5px;top:937px;width:160.5px;height:48px;background:#fff;border-radius:6px;box-shadow:0 1px 3px rgba(0,0,0,0.08);"></div>
<div class="t" style="left:1230.40px;top:950.00px;font-size:24px;color:#0a0a0a;letter-spacing:0.740px;-webkit-text-stroke:0.8px #0a0a0a;">Assets</div>
<div class="t" style="left:1374.80px;top:950.00px;font-size:24px;color:#0a0a0a;letter-spacing:0.875px;-webkit-text-stroke:0.8px #0a0a0a;">Liabilities</div>
<div class="b" style="left:2562px;top:929px;width:381px;height:64px;background:#f9fafa;border-radius:13px;"></div>
<div class="b" style="left:2570px;top:937px;width:206px;height:48px;background:#fff;border-radius:6px;box-shadow:0 1px 3px rgba(0,0,0,0.08);"></div>
<div class="t" style="left:2595.60px;top:950.00px;font-size:24px;color:#0a0a0a;letter-spacing:0.771px;-webkit-text-stroke:0.8px #0a0a0a;">Asset classes</div>
<div class="t" style="left:2801.00px;top:950.00px;font-size:24px;color:#0a0a0a;letter-spacing:0.694px;-webkit-text-stroke:0.8px #0a0a0a;">All assets</div>
<div class="t" style="left:1207.00px;top:1124.00px;font-size:24px;color:#6b7280;letter-spacing:0.125px;-webkit-text-stroke:0.35px #6b7280;">Class</div>
<div class="t" style="left:1626.40px;top:1124.00px;font-size:24px;color:#6b7280;letter-spacing:0.600px;-webkit-text-stroke:0.35px #6b7280;">No. of assets</div>
<div class="t" style="left:1851.00px;top:1124.00px;font-size:24px;color:#6b7280;letter-spacing:0.540px;-webkit-text-stroke:0.35px #6b7280;">% of assets</div>
<div class="t" style="left:2175.60px;top:1124.00px;font-size:24px;color:#6b7280;letter-spacing:0.375px;-webkit-text-stroke:0.35px #6b7280;">Value</div>
<div class="b" style="left:1181px;top:1165px;width:1082px;height:2px;background:#e9ebee;"></div>
<div class="b" style="left:1207px;top:1191.0px;width:16px;height:16.0px;background:#55b1a6;border-radius:4.5px;"></div>
<div class="t" style="left:1239.70px;top:1188.00px;font-size:24px;color:#0a0a0a;letter-spacing:0.100px;-webkit-text-stroke:0.35px #0a0a0a;">Real Estate</div>
<div class="t" style="left:1627.00px;top:1187.00px;font-size:25px;color:#6b7280;-webkit-text-stroke:0.5px #6b7280;">4</div>
<svg class="b" style="left:1857px;top:1180.8px;" width="36" height="36" viewBox="0 0 36 36"><circle cx="18" cy="18" r="14.7" fill="none" stroke="#e8e8e8" stroke-width="4.4"/><circle cx="18" cy="18" r="14.7" fill="none" stroke="#55b1a6" stroke-width="4.4" stroke-dasharray="78.39 92.36" transform="translate(0,36) scale(1,-1)"/></svg>
<div class="t" style="left:1908.80px;top:1187.00px;font-size:25px;color:#6b7280;letter-spacing:1.450px;-webkit-text-stroke:0.5px #6b7280;">84.87%</div>
<div class="t" style="left:2089.00px;top:1187.00px;font-size:25px;color:#6b7280;letter-spacing:1.500px;-webkit-text-stroke:0.5px #6b7280;">$3.32M</div>
<div class="t" style="left:2192.40px;top:1191.00px;font-size:20px;color:#7d7f84;letter-spacing:0.375px;-webkit-text-stroke:0.9px #7d7f84;">CAD</div>
<div class="b" style="left:1207px;top:1255.15px;width:16px;height:16.0px;background:#7688c9;border-radius:4.5px;"></div>
<div class="t" style="left:1239.70px;top:1252.00px;font-size:24px;color:#0a0a0a;letter-spacing:0.650px;-webkit-text-stroke:0.35px #0a0a0a;">Investments</div>
<div class="t" style="left:1627.00px;top:1251.00px;font-size:25px;color:#6b7280;-webkit-text-stroke:0.5px #6b7280;">5</div>
<svg class="b" style="left:1857px;top:1244.95px;" width="36" height="36" viewBox="0 0 36 36"><circle cx="18" cy="18" r="14.7" fill="none" stroke="#e8e8e8" stroke-width="4.4"/><circle cx="18" cy="18" r="14.7" fill="none" stroke="#7688c9" stroke-width="4.4" stroke-dasharray="9.69 92.36" transform="translate(0,36) scale(1,-1)"/></svg>
<div class="t" style="left:1908.80px;top:1251.00px;font-size:25px;color:#6b7280;letter-spacing:1.050px;-webkit-text-stroke:0.5px #6b7280;">10.49%</div>
<div class="t" style="left:2066.00px;top:1251.00px;font-size:25px;color:#6b7280;letter-spacing:1.000px;-webkit-text-stroke:0.5px #6b7280;">$410.63K</div>
<div class="t" style="left:2192.40px;top:1255.00px;font-size:20px;color:#7d7f84;letter-spacing:0.375px;-webkit-text-stroke:0.9px #7d7f84;">CAD</div>
<div class="b" style="left:1207px;top:1319.3px;width:16px;height:16.0px;background:#adbba3;border-radius:4.5px;"></div>
<div class="t" style="left:1239.70px;top:1316.00px;font-size:24px;color:#0a0a0a;-webkit-text-stroke:0.35px #0a0a0a;">Cash</div>
<div class="t" style="left:1627.00px;top:1315.00px;font-size:25px;color:#6b7280;-webkit-text-stroke:0.5px #6b7280;">7</div>
<svg class="b" style="left:1857px;top:1309.1px;" width="36" height="36" viewBox="0 0 36 36"><circle cx="18" cy="18" r="14.7" fill="none" stroke="#e8e8e8" stroke-width="4.4"/><circle cx="18" cy="18" r="14.7" fill="none" stroke="#adbba3" stroke-width="4.4" stroke-dasharray="2.89 92.36" transform="translate(0,36) scale(1,-1)"/></svg>
<div class="t" style="left:1908.80px;top:1315.00px;font-size:25px;color:#6b7280;letter-spacing:0.500px;-webkit-text-stroke:0.5px #6b7280;">3.13%</div>
<div class="t" style="left:2067.00px;top:1315.00px;font-size:25px;color:#6b7280;letter-spacing:0.857px;-webkit-text-stroke:0.5px #6b7280;">$122.65K</div>
<div class="t" style="left:2192.40px;top:1319.00px;font-size:20px;color:#7d7f84;letter-spacing:0.375px;-webkit-text-stroke:0.9px #7d7f84;">CAD</div>
<div class="b" style="left:1207px;top:1383.45px;width:16px;height:16.0px;background:#93a5c5;border-radius:4.5px;"></div>
<div class="t" style="left:1239.70px;top:1380.00px;font-size:24px;color:#0a0a0a;letter-spacing:0.518px;-webkit-text-stroke:0.35px #0a0a0a;">Physical Assets</div>
<div class="t" style="left:1627.00px;top:1379.00px;font-size:25px;color:#6b7280;-webkit-text-stroke:0.5px #6b7280;">1</div>
<svg class="b" style="left:1857px;top:1373.25px;" width="36" height="36" viewBox="0 0 36 36"><circle cx="18" cy="18" r="14.7" fill="none" stroke="#e8e8e8" stroke-width="4.4"/><circle cx="18" cy="18" r="14.7" fill="none" stroke="#93a5c5" stroke-width="4.4" stroke-dasharray="1.39 92.36" transform="translate(0,36) scale(1,-1)"/></svg>
<div class="t" style="left:1908.80px;top:1379.00px;font-size:25px;color:#6b7280;letter-spacing:-0.750px;-webkit-text-stroke:0.5px #6b7280;">1.51%</div>
<div class="t" style="left:2080.00px;top:1379.00px;font-size:25px;color:#6b7280;letter-spacing:1.125px;-webkit-text-stroke:0.5px #6b7280;">$59.27K</div>
<div class="t" style="left:2192.40px;top:1383.00px;font-size:20px;color:#7d7f84;letter-spacing:0.375px;-webkit-text-stroke:0.9px #7d7f84;">CAD</div>
<svg class="b" style="left:0;top:0" width="3024" height="1654" viewBox="0 0 3024 1654"><path d="M2939.00,1404.50 A296,296 0 0 1 2937.67,1432.54 L2887.89,1427.80 A246,246 0 0 0 2889.00,1404.50 Z" fill="#93a5c5" stroke="#fff" stroke-width="1"/><path d="M2937.67,1432.54 A296,296 0 0 1 2926.51,1489.58 L2878.62,1475.21 A246,246 0 0 0 2887.89,1427.80 Z" fill="#adbba3" stroke="#fff" stroke-width="1"/><path d="M2926.51,1489.58 A296,296 0 0 1 2815.02,1645.38 L2785.96,1604.69 A246,246 0 0 0 2878.62,1475.21 Z" fill="#7688c9" stroke="#fff" stroke-width="1"/><path d="M2815.02,1645.38 A296,296 0 1 1 2939.00,1404.50 L2889.00,1404.50 A246,246 0 1 0 2785.96,1604.69 Z" fill="#55afa7" stroke="#fff" stroke-width="1"/></svg>
<div class="t" style="left:2606.50px;top:1363.00px;font-size:23px;color:#0a0a0a;letter-spacing:0.800px;-webkit-text-stroke:0.35px #0a0a0a;">Assets</div>
<div class="t" style="left:2496.80px;top:1403.00px;font-size:36px;color:#0a0a0a;letter-spacing:-0.438px;-webkit-text-stroke:1.1px #0a0a0a;">$3,915,651.61</div>
<div class="t" style="left:2733.00px;top:1408.00px;font-size:27px;color:#0a0a0a;letter-spacing:-0.300px;-webkit-text-stroke:0.8px #0a0a0a;transform:scaleY(1.04);transform-origin:0 22px;">CAD</div>
<div class="b" style="left:2878px;top:1508px;width:96px;height:96px;background:#cfcfcf;border-radius:48px;box-shadow:0 8px 40px rgba(0,0,0,0.14),0 2px 10px rgba(0,0,0,0.06);"></div>
<svg class="b" style="left:2902px;top:1531.5px;shape-rendering:crispEdges;" width="48" height="48" viewBox="0 0 48 48"><rect x="0" y="0" width="12" height="12" fill="#000"/><rect x="24" y="0" width="12" height="12" fill="#565656"/><rect x="12" y="12" width="12" height="12" fill="#565656"/><rect x="24" y="12" width="12" height="12" fill="#737373"/><rect x="36" y="12" width="12" height="12" fill="#909090"/><rect x="0" y="24" width="12" height="12" fill="#565656"/><rect x="12" y="24" width="12" height="12" fill="#737373"/><rect x="24" y="24" width="12" height="12" fill="#909090"/><rect x="36" y="24" width="12" height="12" fill="#b0b0b0"/><rect x="12" y="36" width="12" height="12" fill="#909090"/><rect x="24" y="36" width="12" height="12" fill="#b0b0b0"/></svg>
</div></body></html>
